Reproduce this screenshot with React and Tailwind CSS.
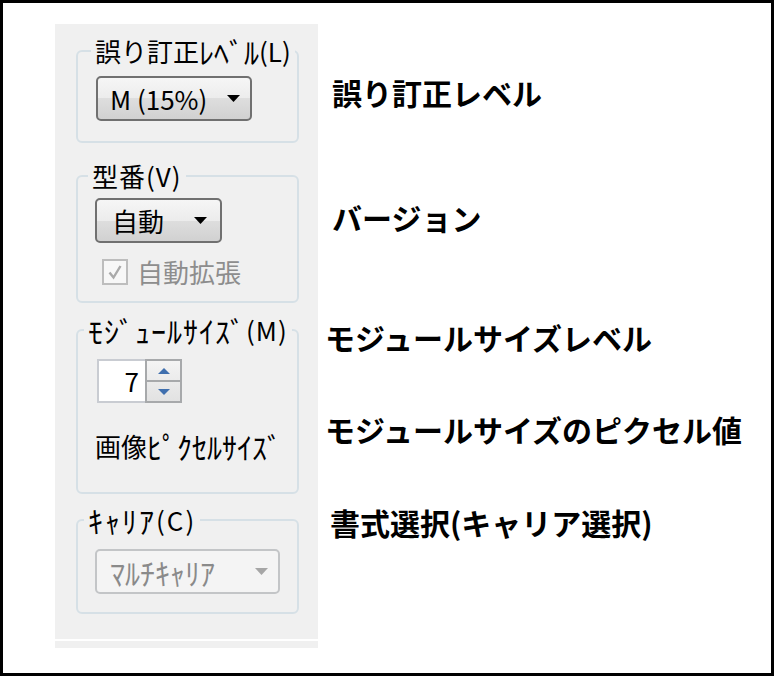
import React from 'react';

// half-width kana are drawn small in Noto CJK, so they get a larger size
const Kana = ({ children }) => (
  <span className="inline-block align-top h-[30px] text-[30px] leading-[30px]">{children}</span>
);

const Arrow = ({ color }) => (
  <svg width="13" height="7" viewBox="0 0 13 7">
    <path d="M0 0h13L6.5 7z" fill={color} />
  </svg>
);

const SpinArrow = ({ up }) => (
  <svg width="12" height="6" viewBox="0 0 12 6">
    <path d={up ? 'M0 6h12L6 0z' : 'M0 0h12L6 6z'} fill="#3f6fae" />
  </svg>
);

const Combo = ({ label, className, disabled }) => (
  <div
    className={`flex items-center justify-between h-[45px] rounded-[5px] border-2 ${
      disabled
        ? 'border-[#c3c5c7] bg-[#f4f4f4] text-[#8a8a8a]'
        : 'border-[#707070] bg-[linear-gradient(#f6f6f6,#ececec_50%,#dedede_50%,#d1d1d1)] text-black'
    } ${className}`}
  >
    <span className="whitespace-nowrap h-[30px]">{label}</span>
    <Arrow color={disabled ? '#a6a6a6' : '#000'} />
  </div>
);

const Group = ({ title, legendClass, className, children }) => (
  <fieldset className={`w-[223px] border-2 border-[#d6e0e6] rounded-[6px] pl-[17px] ${className}`}>
    <legend className={`px-[4px] h-[30px] whitespace-nowrap ${legendClass}`}>{title}</legend>
    {children}
  </fieldset>
);

export default function App() {
  return (
    <div className="w-[774px] h-[676px] border-[3px] border-black bg-white flex overflow-hidden font-['Noto_Sans_CJK_JP','Noto_Sans',sans-serif]">
      {/* dialog panel */}
      <div className="ml-[52px] mt-[21px] w-[263px] h-[624px] bg-[#f0f0f0] flex flex-col pl-[21px] pt-[12px] text-[26px] leading-[30px] text-black">
        <Group
          title={<>誤り訂正<Kana>ﾚﾍﾞﾙ</Kana>(L)</>}
          legendClass="-ml-[4px]"
          className="pb-[20px]"
        >
          <Combo label="M (15%)" className="w-[156px] mt-[10px] ml-[1px] pl-[12px] pr-[10px]" />
        </Group>

        <Group title="型番(V)" legendClass="-ml-[7px] tracking-[1px]" className="mt-[18px] pb-[14px]">
          <Combo label="自動" className="w-[127px] mt-[7px] pl-[15px] pr-[13px]" />
          <div className="flex items-center mt-[14px] ml-[7px] gap-[9px] text-[#8d8d8d]">
            <div className="w-[26px] h-[26px] border-2 border-[#bdbdbd] bg-[#f7f7f7] flex items-center justify-center">
              <svg width="16" height="16" viewBox="0 0 16 16">
                <path d="M2.5 8.5l4 5L13.5 2" stroke="#a9a9a9" strokeWidth="2.4" fill="none" />
              </svg>
            </div>
            <span>自動拡張</span>
          </div>
        </Group>

        <Group
          title={<><Kana>ﾓｼﾞｭｰﾙｻｲｽﾞ</Kana>(M)</>}
          legendClass="-ml-[11px] tracking-[1px]"
          className="mt-[12px] pb-[31px]"
        >
          <div className="flex h-[44px] mt-[14px] ml-[2px]">
            <div className="w-[48px] bg-white border-2 border-r-0 border-[#c9ccd2] flex items-center justify-end pr-[6px]">7</div>
            <div className="w-[37px] flex flex-col border-2 border-[#a7a9ab] bg-[linear-gradient(#f4f4f4,#e2e2e2)]">
              <div className="flex-1 flex items-center justify-center border-b-2 border-[#a7a9ab]">
                <SpinArrow up />
              </div>
              <div className="flex-1 flex items-center justify-center">
                <SpinArrow />
              </div>
            </div>
          </div>
          <div className="mt-[28px] h-[30px] whitespace-nowrap">
            画像<Kana>ﾋﾟｸｾﾙｻｲｽﾞ</Kana>
          </div>
        </Group>

        <Group
          title={<><Kana>ｷｬﾘｱ</Kana>(C)</>}
          legendClass="-ml-[11px] tracking-[2px]"
          className="mt-[11px] pb-[18px]"
        >
          <Combo label={<Kana>ﾏﾙﾁｷｬﾘｱ</Kana>} disabled className="w-[185px] mt-[14px] pl-[13px] pr-[10px]" />
        </Group>

        <div className="mt-auto -ml-[21px] w-[263px] h-[2px] bg-white" />
        <div className="h-[7px]" />
      </div>

      {/* annotations */}
      <div className="ml-[7px] pt-[74px] flex flex-col text-[30px] leading-[30px] font-bold text-black whitespace-nowrap">
        <div className="ml-[7px]">誤り訂正レベル</div>
        <div className="ml-[7px] mt-[95px]">バージョン</div>
        <div className="mt-[90px]">モジュールサイズレベル</div>
        <div className="mt-[62px]">モジュールサイズのピクセル値</div>
        <div className="ml-[5px] mt-[63px]">書式選択(キャリア選択)</div>
      </div>
    </div>
  );
}
